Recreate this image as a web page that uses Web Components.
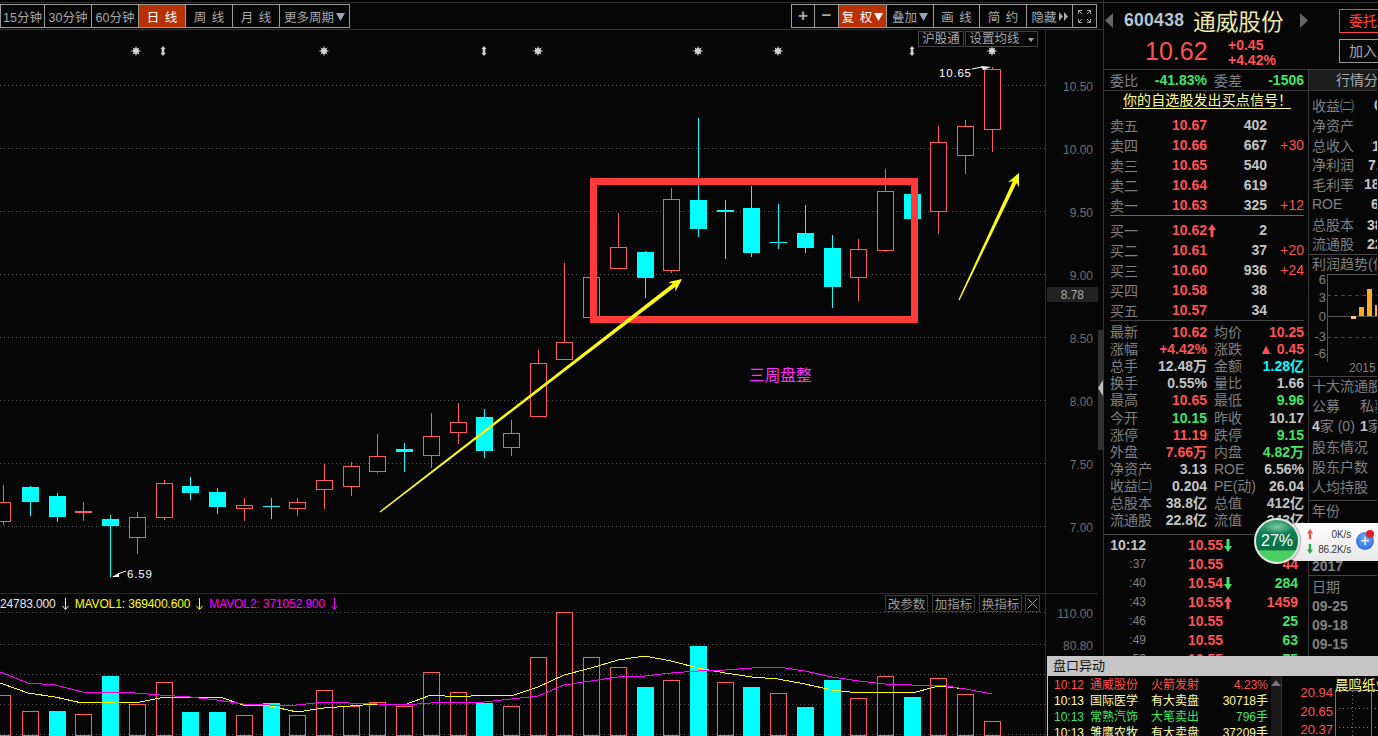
<!DOCTYPE html>
<html>
<head>
<meta charset="utf-8">
<style>
  html, body { margin: 0; background: #060606; overflow: hidden; }
</style>
</head>
<body>
<app-shell>
  <chart-side slot="left"></chart-side>
  <quote-side slot="right"></quote-side>
  <alert-window slot="float"></alert-window>
  <net-widget slot="float"></net-widget>
</app-shell>

<script>
const FONT = '"Liberation Sans","Noto Sans CJK SC",sans-serif';
const RED = "#ff5252", GREEN = "#3fe566", CYAN = "#00ffff", GRAY = "#808080", LIGHT = "#c4c4c4";

function arrow(dir, color) {
  const d = dir === "up" ? "M4 0L8 6H5.5V13H2.5V6H0Z" : "M2.5 0H5.5V7H8L4 13L0 7H2.5Z";
  return `<svg width="8" height="13" viewBox="0 0 8 13" style="vertical-align:-2px"><path d="${d}" fill="${color}"/></svg>`;
}

class AppShell extends HTMLElement {
  constructor() {
    super();
    this.attachShadow({ mode: "open" }).innerHTML = `
      <style>
        :host { display: block; position: relative; width: 1378px; height: 736px; overflow: hidden;
                background: #060606; font-family: ${FONT}; }
        .cols { display: grid; grid-template-columns: 1104px 274px; height: 736px; }
        .left { border-right: 1px solid #333; box-sizing: content-box; width: 1103px; overflow: hidden; }
        .right { overflow: hidden; }
      </style>
      <div class="cols">
        <div class="left"><slot name="left"></slot></div>
        <div class="right"><slot name="right"></slot></div>
      </div>
      <slot name="float"></slot>`;
  }
}

class BarBtn extends HTMLElement {
  constructor() {
    super();
    this.attachShadow({ mode: "open" }).innerHTML = `
      <style>
        :host { display: flex; align-items: center; justify-content: center; box-sizing: border-box;
                width: var(--w); height: 24px; margin-left: -1px; border: 1px solid #9a9a9a;
                color: #a8a8a8; font-size: 12.5px; white-space: pre; gap: 2px; word-spacing: 2px; }
        :host([active]) { background: #b83200; color: #fff; }
        svg { display: block; }
      </style>
      <slot></slot>`;
    if (this.hasAttribute("caret")) {
      const c = this.hasAttribute("active") ? "#fff" : "#9aa4b4";
      this.shadowRoot.innerHTML += `<svg width="9" height="9" viewBox="0 0 9 9"><path d="M0 1H9L4.5 9Z" fill="${c}"/></svg>`;
    }
  }
}

class TopBar extends HTMLElement {
  constructor() {
    super();
    const btn = (w, t, attrs = "") => `<bar-btn style="--w:${w + 1}px" ${attrs}>${t}</bar-btn>`;
    this.attachShadow({ mode: "open" }).innerHTML = `
      <style>
        :host { display: flex; justify-content: space-between; box-sizing: border-box; height: 30px;
                padding: 1px 6px 0 0; border-top: 2px solid #000; border-bottom: 1px solid #333;
                box-shadow: inset 0 1px 0 #333; }
        .g { display: flex; padding-top: 1px; }
        .g.first { margin-left: 1px; }
      </style>
      <div class="g first">
        ${btn(44, "15分钟")}${btn(47, "30分钟")}${btn(47, "60分钟")}${btn(47, "日 线", "active")}
        ${btn(47, "周 线")}${btn(47, "月 线")}${btn(70, "更多周期", "caret")}
      </div>
      <div class="g">
        ${btn(23, `<b style="font-size:17px">+</b>`)}${btn(24, `<b style="font-size:17px">−</b>`)}
        ${btn(48, "复 权", "active caret")}${btn(47, "叠加", "caret")}${btn(46, "画 线")}
        ${btn(47, "简 约")}${btn(46, `隐藏<svg width="9" height="9" viewBox="0 0 9 9"><path d="M0 0L4 4.5L0 9ZM5 0L9 4.5L5 9Z" fill="#a8a8a8"/></svg>`)}
        ${btn(24, `<svg width="13" height="13" viewBox="0 0 13 13" fill="none" stroke="#a8a8a8"><path d="M.5 4V.5H4M9 .5H12.5V4M12.5 9V12.5H9M4 12.5H.5V9M1 1L4 4M12 1L9 4M12 12L9 9M1 12L4 9"/></svg>`)}
      </div>`;
  }
}

// [kind, bodyTop, bodyBottom, wickTop, wickBottom]
const CANDLES = [
  ["r",502,521,485,525],["c",487,502,486,516],["c",496,517,493,522],["R",511,513,502,521],
  ["c",519,526,515,577],["r",517,537,512,554],["r",483,517,480,520],["c",486,493,477,500],
  ["c",492,507,488,514],["r",505,508,498,521],["c",506,507,498,519],["r",502,508,498,516],
  ["r",480,489,464,509],["r",466,486,462,496],["r",456,471,434,473],["c",449,452,443,472],
  ["r",436,455,413,468],["r",422,432,403,444],["c",417,451,409,458],["r",433,447,420,456],
  ["r",363,416,350,416],["r",342,359,263,360],["r",277,317,277,317],["r",247,268,213,268],
  ["c",252,278,251,298],["r",199,270,188,273],["c",200,229,118,237],["c",210,212,200,259],
  ["c",208,253,186,257],["c",242,243,204,249],["c",233,248,205,253],["c",248,287,235,308],
  ["r",249,277,239,301],["r",191,250,169,252],["c",194,219,194,219],["r",142,211,126,234],
  ["r",126,155,120,174],["r",69,129,67,152]
];
const VOLS = [
  ["r",695],["r",711],["c",711],["r",714],["c",676],["r",704],["r",682],["c",712],["c",712],["r",715],
  ["c",703],["r",715],["r",690],["r",706],["r",702],["r",706],["r",672],["r",692],["c",703],["r",706],
  ["r",657],["r",612],["r",657],["r",667],["c",687],["r",680],["c",646],["r",682],["c",687],["r",693],
  ["c",707],["c",680],["r",698],["r",676],["c",697],["r",678],["r",694],["r",721]
];
const MA1 = [[0,683],[28,693],[55,697],[82,703],[117,702],[135,703],[165,697],[190,697],[220,697],[243,705],[270,706],[297,712],[324,708],[350,706],[377,704],[404,705],[431,695],[458,697],[484,695],[511,696],[520,693],[538,687],[564,675],[591,668],[618,660],[645,656],[671,661],[698,668],[725,673],[752,677],[778,679],[805,684],[832,690],[859,693],[885,692],[912,693],[939,686],[966,689]];
const MA2 = [[0,672],[28,683],[55,685],[83,692],[110,692],[135,693],[160,695],[190,697],[217,700],[243,704],[270,705],[297,705],[324,702],[350,703],[377,704],[404,705],[431,703],[458,702],[484,702],[520,698],[538,696],[564,685],[591,681],[618,677],[645,676],[671,673],[698,671],[725,670],[752,668],[778,667],[805,671],[832,677],[859,681],[885,684],[912,685],[939,685],[966,689],[992,694]];
const cx = i => Math.round(3.3 + i * 26.72);

function dots(y, x2 = 1045) {
  return `<line x1="0" x2="${x2}" y1="${y}.5" y2="${y}.5" stroke="#555" stroke-dasharray="1 3"/>`;
}
function yellowArrow(x1, y1, x2, y2) {
  const len = Math.hypot(x2 - x1, y2 - y1), dx = (x2 - x1) / len, dy = (y2 - y1) / len, nx = -dy, ny = dx;
  const p = (a, b) => `${(x2 - dx * a + nx * b).toFixed(1)},${(y2 - dy * a + ny * b).toFixed(1)}`;
  return `<polygon fill="#ffff14" points="${p(len, .7)} ${p(10, 2)} ${p(13, 6)} ${p(0, 0)} ${p(13, -6)} ${p(10, -2)} ${p(len, -.7)}"/>`;
}
function star(x) {
  let rays = "";
  for (let a = 0; a < 8; a++) {
    const t = a * Math.PI / 4;
    rays += `<line x1="${x}" y1="51" x2="${(x + 4.6 * Math.cos(t)).toFixed(1)}" y2="${(51 + 4.6 * Math.sin(t)).toFixed(1)}"/>`;
  }
  return `<g stroke="#d0d0d0" stroke-width="1"><circle cx="${x}" cy="51" r="2.6" fill="#d0d0d0"/>${rays}</g>`;
}
function updown(x) {
  return `<path fill="#d0d0d0" d="M${x} 46l2.5 3h-1.2v4h1.2L${x} 56l-2.5-3h1.2v-4h-1.2z"/>`;
}

class PricePane extends HTMLElement {
  constructor() {
    super();
    let s = "";
    [85, 148, 211, 274, 337, 400, 463, 526].forEach(y => { s += dots(y); });
    ["10.50", "10.00", "9.50", "9.00", "8.50", "8.00", "7.50", "7.00"].forEach((t, i) => {
      s += `<text x="1093" y="${91 + i * 63}" text-anchor="end" fill="#6e6e6e" font-size="12">${t}</text>`;
    });
    CANDLES.forEach((c, i) => {
      const x = cx(i), col = c[0] === "c" ? CYAN : "#ff5c5c";
      s += `<line x1="${x}.5" x2="${x}.5" y1="${c[3]}" y2="${c[4]}" stroke="${col}" shape-rendering="crispEdges"/>`;
      if (c[0] === "r") {
        s += `<rect x="${x - 8}.5" y="${c[1]}.5" width="16" height="${c[2] - c[1]}" fill="#060606" stroke="${col}" shape-rendering="crispEdges"/>`;
      } else {
        s += `<rect x="${x - 8}" y="${c[1]}" width="17" height="${c[2] - c[1]}" fill="${col}"/>`;
      }
    });
    [136, 324, 538, 698, 778, 992].forEach(x => { s += star(x); });
    [163, 484, 912].forEach(x => { s += updown(x); });
    s += `<text x="939" y="77" fill="#fff" font-size="11.5" letter-spacing=".8">10.65</text>
      <path d="M972 69L982 67" stroke="#fff" fill="none"/><path d="M981 66L991 67L983 70Z" fill="#fff"/>
      <text x="127" y="578" fill="#fff" font-size="11.5" letter-spacing=".8">6.59</text>
      <path d="M126 571L118 574" stroke="#fff" fill="none"/><path d="M112 577L119 573L119 577Z" fill="#fff"/>
      <rect x="593.5" y="181.5" width="321" height="138" fill="none" stroke="#ff3a3a" stroke-width="7"/>
      ${yellowArrow(380, 512, 682, 279)}${yellowArrow(959, 300, 1019, 173)}
      <text x="749" y="381" fill="#ff30ff" font-size="15.7">三周盘整</text>
      <line x1="1045.5" x2="1045.5" y1="30" y2="593" stroke="#2c2c2c"/>
      <rect x="1047" y="287" width="51" height="15" fill="#232323"/>
      <text x="1084" y="299" text-anchor="end" fill="#a8a8a8" font-size="12">8.78</text>`;
    this.attachShadow({ mode: "open" }).innerHTML = `
      <style>
        :host { display: block; position: relative; height: 564px; border-bottom: 1px solid #2c2c2c; box-sizing: border-box; }
        svg { display: block; font-family: ${FONT}; }
        .tools { position: absolute; left: 918px; top: 1px; display: flex; gap: 1px; color: #a8a8a8; font-size: 12.5px; }
        .tools span { display: flex; align-items: center; justify-content: center; gap: 8px; height: 14px; line-height: 14px;
                      border: 1px solid #444; padding: 0 2px; }
        .a { width: 40px; } .b { width: 67px; }
        i { border: 3px solid transparent; border-top: 4px solid #a8a8a8; margin-top: 4px; }
      </style>
      <svg width="1098" height="563" viewBox="0 30 1098 563">${s}</svg>
      <div class="tools"><span class="a">沪股通</span><span class="b">设置均线<i></i></span></div>`;
  }
}

class VolumePane extends HTMLElement {
  constructor() {
    super();
    let s = "";
    [612, 644, 674, 704, 734].forEach(y => { s += dots(y); });
    VOLS.forEach((v, i) => {
      const x = cx(i);
      if (v[0] === "r") s += `<rect x="${x - 8}.5" y="${v[1]}.5" width="16" height="${735 - v[1]}" fill="none" stroke="#ff5c5c" shape-rendering="crispEdges"/>`;
      else s += `<rect x="${x - 8}" y="${v[1]}" width="17" height="${736 - v[1]}" fill="${CYAN}"/>`;
    });
    const line = (pts, col) => `<polyline fill="none" stroke="${col}" shape-rendering="crispEdges" points="${pts.map(p => p.join(",")).join(" ")}"/>`;
    s += line(MA1, "#ffff00") + line(MA2, "#ff00ff");
    s += `<line x1="1045.5" x2="1045.5" y1="594" y2="736" stroke="#2c2c2c"/>
      <text x="1093" y="618" text-anchor="end" fill="#6e6e6e" font-size="12">110.00</text>
      <text x="1093" y="650" text-anchor="end" fill="#6e6e6e" font-size="12">80.80</text>`;
    const down = c => `<svg width="7" height="12" viewBox="0 0 7 12" fill="none" stroke="${c}"><path d="M3.5 0V11M.5 8L3.5 11.5L6.5 8"/></svg>`;
    this.attachShadow({ mode: "open" }).innerHTML = `
      <style>
        :host { display: block; position: relative; height: 142px; }
        svg { display: block; font-family: ${FONT}; }
        .legend { position: absolute; left: 0; top: 2px; display: flex; align-items: center; font-size: 12px; height: 15px; letter-spacing: -.12px; }
        .legend svg { margin: 0 6px 0 6px; }
        .btns { position: absolute; left: 885px; top: 1px; display: flex; gap: 4px; font-size: 12.5px; color: #9a9a9a; }
        .btns span { display: flex; align-items: center; justify-content: center; width: 41px; height: 15px; border: 1px solid #3c3c3c; }
        .btns span.x { width: 13px; margin-left: -1px; }
      </style>
      <svg width="1098" height="142" viewBox="0 594 1098 142">${s}</svg>
      <div class="legend">
        <span style="color:#e8e8e8">24783.000</span>${down("#e8e8e8")}
        <span style="color:#ffff00">MAVOL1: 369400.600</span>${down("#ffff00")}
        <span style="color:#ff00ff">MAVOL2: 371052.900</span>${down("#ff00ff")}
      </div>
      <div class="btns"><span>改参数</span><span>加指标</span><span>换指标</span>
        <span class="x"><svg width="11" height="11" viewBox="0 0 11 11" stroke="#9a9a9a"><path d="M.5 .5L10.5 10.5M10.5 .5L.5 10.5"/></svg></span></div>`;
  }
}

class SideScroll extends HTMLElement {
  constructor() {
    super();
    this.attachShadow({ mode: "open" }).innerHTML = `
      <style>
        :host { display: flex; flex-direction: column; width: 6px; padding-top: 300px; box-sizing: border-box; }
        .thumb { height: 120px; background: #303030; padding-top: 50px; box-sizing: border-box; }
        svg { display: block; }
      </style>
      <div class="thumb"><svg width="5" height="16" viewBox="0 0 5 16"><path d="M5 0V16L0 8Z" fill="#bdbdbd"/></svg></div>`;
  }
}

class ChartSide extends HTMLElement {
  constructor() {
    super();
    this.attachShadow({ mode: "open" }).innerHTML = `
      <style>
        :host { display: block; }
        .body { display: grid; grid-template-columns: 1098px 6px; }
        .panes { display: flex; flex-direction: column; }
      </style>
      <top-bar></top-bar>
      <div class="body">
        <div class="panes"><price-pane></price-pane><volume-pane></volume-pane></div>
        <side-scroll></side-scroll>
      </div>`;
  }
}

class StockHead extends HTMLElement {
  constructor() {
    super();
    this.attachShadow({ mode: "open" }).innerHTML = `
      <style>
        :host { display: grid; grid-template-columns: 235px 1fr; height: 68px; box-sizing: border-box;
                border-top: 1px solid #333; border-bottom: 1px solid #3a3a3a; }
        .l { display: flex; flex-direction: column; }
        .name { display: flex; align-items: center; height: 32px; margin-top: 1px; }
        .code { font-size: 17.5px; font-weight: bold; color: #b8c4d0; margin-left: 11px; width: 69px; letter-spacing: .3px; }
        .cn { font-size: 22.7px; color: #ece8a8; width: 106px; }
        .price { display: flex; align-items: center; height: 32px; padding-left: 41px; }
        .p { font-size: 25px; color: ${RED}; width: 83px; padding-bottom: 2px; }
        .d { font-size: 14px; font-weight: bold; color: ${RED}; line-height: 15px; padding-top: 1px; }
        .r { display: flex; flex-direction: column; gap: 6px; padding-top: 6px; }
        .r span { box-sizing: border-box; height: 24px; padding-left: 9px; line-height: 22px; font-size: 14px; white-space: nowrap; width: 60px; overflow: hidden; }
        .t { border: 1px solid #ff4040; color: #ff4040; }
        .j { border: 1px solid #999; color: #aaa; }
        svg { display: block; margin-left: 1px; }
      </style>
      <div class="l">
        <div class="name">
          <svg width="8" height="15" viewBox="0 0 8 15"><path d="M8 0V15L0 7.5Z" fill="#666"/></svg>
          <span class="code">600438</span><span class="cn">通威股份</span>
          <svg width="8" height="15" viewBox="0 0 8 15"><path d="M0 0V15L8 7.5Z" fill="#666"/></svg>
        </div>
        <div class="price"><span class="p">10.62</span><span class="d">+0.45<br>+4.42%</span></div>
      </div>
      <div class="r"><span class="t">委托买入</span><span class="j">加入自选</span></div>`;
  }
}

class DepthBook extends HTMLElement {
  constructor() {
    super();
    const row = ([l, p, q, d, up]) => `<div class="row">
        <span class="lb">${l}</span><span class="pr">${p}${up ? arrow("up", RED) : ""}</span>
        <span class="qt">${q}</span><span class="dl">${d || ""}</span></div>`;
    const sell = [["卖五","10.67","402"],["卖四","10.66","667","+30"],["卖三","10.65","540"],["卖二","10.64","619"],["卖一","10.63","325","+12"]];
    const buy = [["买一","10.62","2","",1],["买二","10.61","37","+20"],["买三","10.60","936","+24"],["买四","10.58","38"],["买五","10.57","34"]];
    this.attachShadow({ mode: "open" }).innerHTML = `
      <style>
        :host { display: block; }
        .top { display: flex; align-items: center; height: 20px; padding: 0 0 0 6px; border-bottom: 1px solid #3a3a3a; font-size: 14px; }
        .top .g { color: ${GREEN}; font-weight: bold; text-align: right; }
        .sig { height: 15px; margin: 2px 0 0 19px; width: 168px; line-height: 15px; font-size: 14px; letter-spacing: .1px; color: #ffff90;
               border-bottom: 1px solid #ffff90; box-sizing: content-box; white-space: nowrap; }
        .sect { margin: 0 0 0 6px; width: 194px; padding-top: 6px; border-bottom: 1px solid #666; }
        .sect.b { padding-top: 4px; border-bottom-color: #444; }
        .row { display: grid; grid-template-columns: 62px 60px 35px 37px; height: 20px; align-items: center; font-size: 14px; font-weight: bold; }
        .lb { color: ${GRAY}; font-weight: normal; }
        .pr { color: ${RED}; white-space: nowrap; }
        .pr svg { margin-left: 1px; }
        .qt { color: ${LIGHT}; text-align: right; }
        .dl { color: ${RED}; font-weight: normal; text-align: right; }
      </style>
      <div class="top">
        <span style="color:${GRAY};width:28px">委比</span><span class="g" style="width:69px">-41.83%</span>
        <span style="color:${GRAY};width:28px;margin-left:7px">委差</span><span class="g" style="width:62px">-1506</span>
      </div>
      <div class="sig">你的自选股发出买点信号！</div>
      <div class="sect">${sell.map(row).join("")}</div>
      <div class="sect b">${buy.map(row).join("")}</div>`;
  }
}

class StatGrid extends HTMLElement {
  constructor() {
    super();
    const W = LIGHT;
    const rows = [
      ["最新","10.62",RED,"均价","10.25",RED],["涨幅","+4.42%",RED,"涨跌","▲ 0.45",RED],
      ["总手","12.48万",W,"金额","1.28亿",CYAN],["换手","0.55%",W,"量比","1.66",W],
      ["最高","10.65",RED,"最低","9.96",GREEN],["今开","10.15",GREEN,"昨收","10.17",W],
      ["涨停","11.19",RED,"跌停","9.15",GREEN],["外盘","7.66万",RED,"内盘","4.82万",GREEN],
      ["净资产","3.13",W,"ROE","6.56%",W],["收益㈡","0.204",W,"PE(动)","26.04",W],
      ["总股本","38.8亿",W,"总值","412亿",W],["流通股","22.8亿",W,"流值","243亿",W]
    ];
    this.attachShadow({ mode: "open" }).innerHTML = `
      <style>
        :host { display: grid; grid-template-columns: 97px 90px; column-gap: 7px; grid-auto-rows: 17.1px;
                margin-left: 6px; padding-top: 3px; height: 213px; box-sizing: border-box; align-items: center; }
        div { display: flex; justify-content: space-between; align-items: center; font-size: 14px; white-space: nowrap; line-height: 17px; }
        .lb { color: ${GRAY}; }
        .v { font-weight: bold; }
      </style>
      ${rows.map(r => `<div><span class="lb">${r[0]}</span><span class="v" style="color:${r[2]}">${r[1]}</span></div>
        <div><span class="lb">${r[3]}</span><span class="v" style="color:${r[5]}">${r[4]}</span></div>`).join("")}`;
  }
}

class TickList extends HTMLElement {
  constructor() {
    super();
    const ticks = [["10:12","10.55","down","",RED],[":37","10.55","","44",RED],[":40","10.54","down","284",GREEN],
      [":43","10.55","up","1459",RED],[":46","10.55","","25",GREEN],[":49","10.55","","63",GREEN],[":52","10.55","","75",GREEN]];
    this.attachShadow({ mode: "open" }).innerHTML = `
      <style>
        :host { display: block; border-top: 1px solid #444; }
        .row { display: grid; grid-template-columns: 42px 42px 60px 50px; height: 19px; align-items: center; font-size: 14px; font-weight: bold; }
        .t { text-align: right; color: ${GRAY}; font-size: 12px; font-weight: normal; }
        .t.main { color: ${LIGHT}; font-size: 14px; font-weight: bold; }
        .p { grid-column: 3; color: ${RED}; white-space: nowrap; }
        .p svg { margin-left: 1px; }
        .q { text-align: right; }
      </style>
      ${ticks.map((t, i) => `<div class="row"><span class="t ${i ? "" : "main"}">${t[0]}</span>
        <span class="p">${t[1]}${t[2] ? arrow(t[2], t[2] === "up" ? RED : GREEN) : ""}</span>
        <span class="q" style="color:${t[4]}">${t[3]}</span></div>`).join("")}`;
  }
}

class FinSide extends HTMLElement {
  constructor() {
    super();
    const fin = [["收益㈡","0.204",20],["净资产","3.13",30],["总收入","178.3亿",18],["净利润","7.46亿",14],
      ["毛利率","18.64%",10],["ROE","6.56%",17],["总股本","38.8亿",13],["流通股","22.8亿",13]];
    this.attachShadow({ mode: "open" }).innerHTML = `
      <style>
        :host { display: flex; flex-direction: column; width: 68px; overflow: hidden; font-size: 14px; color: ${GRAY}; white-space: nowrap; }
        .tab { height: 20px; line-height: 20px; background: #1c1c1c; padding-left: 27px; color: #aaa; border-bottom: 1px solid #3a3a3a; flex: none; }
        .list { padding: 4px 0 0 3px; height: 164px; box-sizing: border-box; border-bottom: 1px solid #444; flex: none; }
        .f { display: flex; height: 19.8px; align-items: center; }
        .f b { color: ${LIGHT}; margin-left: var(--m); }
        .f span { width: 42px; flex: none; }
        .h { height: 19px; line-height: 19px; padding-left: 3px; flex: none; }
        .trend { display: block; flex: none; }
        .yr { height: 8px; line-height: 8px; padding-left: 40px; font-size: 12px; flex: none; }
        .ln { border-top: 1px solid #444; height: 19px; line-height: 19px; padding-left: 3px; margin-top: 4px; flex: none; }
        .two { display: flex; padding: 4px 0 0 3px; height: 12px; line-height: 12px; flex: none; }
        .two span:first-child, .vals span:first-child { width: 48px; flex: none; }
        .vals { display: flex; padding: 8px 0 0 3px; height: 13px; line-height: 13px; color: ${GRAY}; flex: none; }
        .vals b { font-size: 14px; color: ${LIGHT}; }
        .menu { padding: 4px 0 3px 3px; display: flex; flex-direction: column; border-bottom: 1px solid #444; flex: none; }
        .menu span { height: 20px; line-height: 20px; }
        .yr2 { padding-left: 3px; height: 57px; line-height: 20px; box-sizing: border-box; flex: none; }
        .y17 { padding-left: 3px; height: 17px; line-height: 17px; font-weight: bold; color: ${GRAY}; border-bottom: 1px solid #444; flex: none; }
        .d { padding-left: 3px; height: 19px; line-height: 19px; flex: none; }
        .d.first { margin-top: 2px; }
        .d b { color: ${GRAY}; }
      </style>
      <div class="tab">行情分析</div>
      <div class="list">${fin.map(f => `<div class="f" style="--m:${f[2]}px"><span>${f[0]}</span><b>${f[1]}</b></div>`).join("")}</div>
      <div class="h">利润趋势(亿)</div>
      <svg class="trend" width="68" height="90" viewBox="1310 274 68 90" font-family='"Liberation Sans",sans-serif' font-size="13" fill="${GRAY}">
        <path d="M1328.5 274V362M1328 274.5H1378M1328 316.5H1378" stroke="#555" fill="none"/>
        <path d="M1328 295.5H1378M1328 337.5H1378" stroke="#444" stroke-dasharray="4 3" fill="none"/>
        <text x="1327" y="284" text-anchor="end">6</text><text x="1327" y="302" text-anchor="end">3</text>
        <text x="1327" y="321" text-anchor="end">0</text><text x="1327" y="341" text-anchor="end">-3</text>
        <text x="1327" y="358" text-anchor="end">-6</text>
        <rect x="1352" y="316" width="5" height="3" fill="#ffc868"/>
        <rect x="1360" y="307" width="5" height="9" fill="#ffa820"/>
        <rect x="1368" y="289" width="5" height="27" fill="#ffa820"/>
        <rect x="1376" y="305" width="5" height="11" fill="#ffa820"/>
      </svg>
      <div class="yr">2015</div>
      <div class="ln">十大流通股东</div>
      <div class="two"><span>公募</span><span>私募</span></div>
      <div class="vals"><span><b>4</b>家 (0)</span><span><b>1</b>家</span></div>
      <div class="menu"><span>股东情况</span><span>股东户数</span><span>人均持股</span></div>
      <div class="yr2">年份</div>
      <div class="y17">2017</div>
      <div class="d first">日期</div>
      <div class="d"><b>09-25</b></div><div class="d"><b>09-18</b></div><div class="d"><b>09-15</b></div>`;
  }
}

class QuoteSide extends HTMLElement {
  constructor() {
    super();
    this.attachShadow({ mode: "open" }).innerHTML = `
      <style>
        :host { display: block; margin-top: 2px; }
        .cols { display: grid; grid-template-columns: 205px 69px; }
        .a { border-right: 1px solid #3a3a3a; display: flex; flex-direction: column; }
      </style>
      <stock-head></stock-head>
      <div class="cols">
        <div class="a"><depth-book></depth-book><stat-grid></stat-grid><tick-list></tick-list></div>
        <fin-side></fin-side>
      </div>`;
  }
}

class AlertWindow extends HTMLElement {
  constructor() {
    super();
    const rows = [
      ["10:12","通威股份","火箭发射","4.23%",RED,RED],
      ["10:13","国际医学","有大卖盘","30718手","#ffffa0","#ffffa0"],
      ["10:13","常熟汽饰","大笔卖出","796手",GREEN,GREEN],
      ["10:13","雏鹰农牧","有大卖盘","37209手","#ffffa0","#ffffa0"]
    ];
    this.attachShadow({ mode: "open" }).innerHTML = `
      <style>
        :host { position: absolute; left: 1047px; top: 656px; width: 331px; height: 80px; display: flex; flex-direction: column;
                background: #060606; font-size: 12px; overflow: hidden; }
        .title { height: 20px; line-height: 20px; padding-left: 6px; background: #c6c6c6; color: #111; font-size: 13px; flex: none; }
        .body { flex: 1; display: grid; grid-template-columns: 223px 10px 4px 93px; border-left: 1px solid #c6c6c6; min-height: 0; }
        .list { padding: 1px 0 0 6px; }
        .r { display: grid; grid-template-columns: 36px 61px 60px 57px; height: 16px; line-height: 16px; white-space: nowrap; }
        .r span:last-child { text-align: right; }
        .sb { background: #181818; padding: 4px 0 0 0; }
        .sb svg { display: block; }
        .sep { border-left: 1px solid #333; }
        .mini { display: block; }
      </style>
      <div class="title">盘口异动</div>
      <div class="body">
        <div class="list">${rows.map(r => `<div class="r" style="color:${r[4]}"><span>${r[0]}</span><span>${r[1]}</span>
          <span>${r[2]}</span><span>${r[3]}</span></div>`).join("")}</div>
        <div class="sb"><svg width="10" height="6" viewBox="0 0 10 6"><path d="M5 0L10 6H0Z" fill="#777"/></svg></div>
        <div class="sep"></div>
        <svg class="mini" width="93" height="60" viewBox="1285 676 93 60" font-family='"Liberation Sans","Noto Sans CJK SC",sans-serif'>
          <path d="M1335.5 691V736M1335 690.5H1378M1371.5 691V736" stroke="#777" fill="none"/>
          <path d="M1335 708.5H1378M1335 727.5H1378M1352.5 691V736" stroke="#777" stroke-dasharray="1 3" fill="none"/>
          <text x="1333" y="697" text-anchor="end" font-size="13" fill="${RED}">20.94</text>
          <text x="1333" y="716" text-anchor="end" font-size="13" fill="${RED}">20.65</text>
          <text x="1333" y="734" text-anchor="end" font-size="13" fill="${RED}">20.37</text>
          <text x="1335" y="690" font-size="13.5" fill="#ffff80">晨鸣纸业</text>
        </svg>
      </div>`;
  }
}

class NetWidget extends HTMLElement {
  constructor() {
    super();
    this.attachShadow({ mode: "open" }).innerHTML = `
      <style>
        :host { position: absolute; left: 1253px; top: 517px; width: 125px; height: 48px; display: block; }
        .pill { position: absolute; left: 30px; top: 6px; right: 0; height: 38px; background: linear-gradient(#fff, #e8e8e8);
                border-radius: 14px 0 0 14px; display: flex; flex-direction: column; justify-content: center; font-size: 10px; color: #333; letter-spacing: -.15px; }
        .rate { display: grid; grid-template-columns: 68px; height: 15px; line-height: 15px; text-align: right; position: relative; }
        .rate svg { position: absolute; left: 23px; top: 2px; }
        .plus { position: absolute; left: 103px; top: 15px; width: 18px; height: 18px; border-radius: 50%;
                background: radial-gradient(circle at 50% 35%, #6aa8ff, #1f62d8); color: #fff; text-align: center; font-size: 16px; line-height: 17px; }
        .dot { position: absolute; left: 113px; top: 13px; width: 8px; height: 8px; border-radius: 50%; background: #e02020; }
        .orb { position: absolute; left: 1px; top: 1px; width: 46px; height: 46px; box-sizing: border-box; border-radius: 50%;
               border: 2px solid #e4e8e6; overflow: hidden;
               background: radial-gradient(ellipse 16px 7px at 50% 7px, #7cc8a4, transparent),
                           linear-gradient(#2f9a70 0%, #0d7a50 35%, #0a6e48 72%, #49cf62 73%, #49cf62 100%);
               color: #fff; font-size: 16px; text-align: center; line-height: 41px; box-shadow: 0 0 2px #000; }
      </style>
      <div class="pill">
        <div class="rate"><svg width="8" height="10" viewBox="0 0 8 13"><path d="M4 0L8 6H5.5V13H2.5V6H0Z" fill="#e8553a"/></svg>0K/s</div>
        <div class="rate"><svg width="8" height="10" viewBox="0 0 8 13"><path d="M2.5 0H5.5V7H8L4 13L0 7H2.5Z" fill="#2aa84a"/></svg>86.2K/s</div>
      </div>
      <div class="plus">+</div><div class="dot"></div>
      <div class="orb">27%</div>`;
  }
}

customElements.define("app-shell", AppShell);
customElements.define("bar-btn", BarBtn);
customElements.define("top-bar", TopBar);
customElements.define("price-pane", PricePane);
customElements.define("volume-pane", VolumePane);
customElements.define("side-scroll", SideScroll);
customElements.define("chart-side", ChartSide);
customElements.define("stock-head", StockHead);
customElements.define("depth-book", DepthBook);
customElements.define("stat-grid", StatGrid);
customElements.define("tick-list", TickList);
customElements.define("fin-side", FinSide);
customElements.define("quote-side", QuoteSide);
customElements.define("alert-window", AlertWindow);
customElements.define("net-widget", NetWidget);
</script>
</body>
</html>
